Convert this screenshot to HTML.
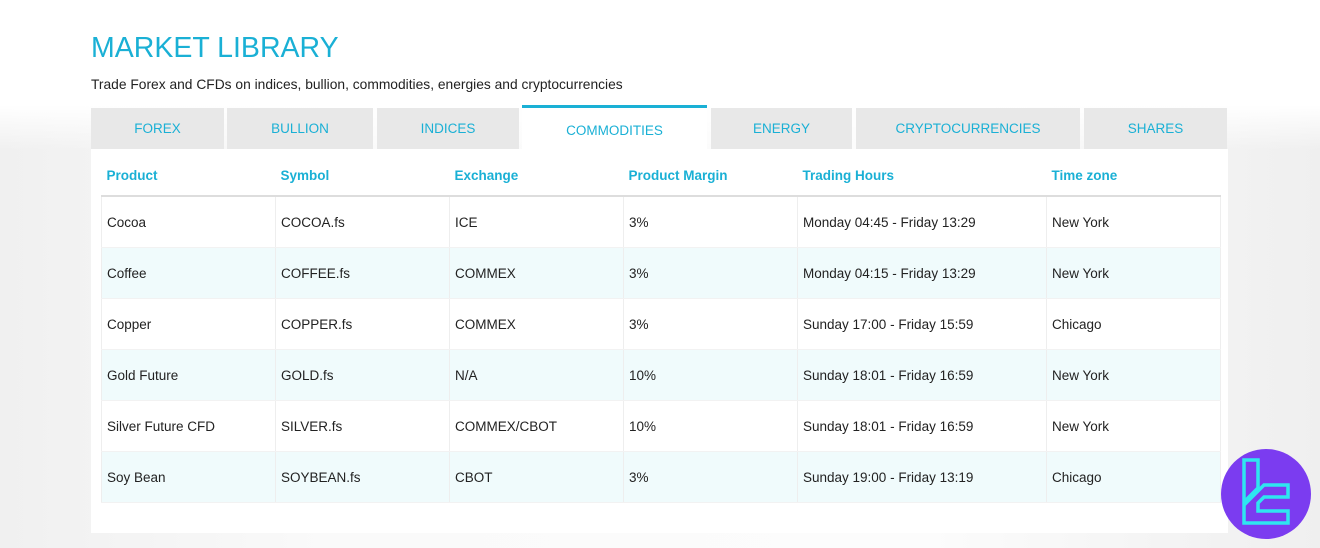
<!DOCTYPE html>
<html><head><style>
body{margin:0;width:1320px;height:548px;overflow:hidden;font-family:"Liberation Sans",sans-serif;background:linear-gradient(90deg,#f0f0f0 0%,#fafafa 25%,#fcfcfc 70%,#efefef 100%);position:relative}
.top{position:absolute;left:0;top:0;width:1320px;height:150px;background:linear-gradient(180deg,#fff 0%,#fff 70%,rgba(255,255,255,0) 100%)}
h1{position:absolute;left:91px;top:32px;margin:0;font-weight:normal;font-size:28.5px;color:#1ab0d5}
.sub{position:absolute;left:91px;top:77px;font-size:13.8px;color:#222}
.tab{position:absolute;top:108px;height:41px;background:#e8e8e8;color:#1ab0d5;font-size:13.5px;display:flex;align-items:center;justify-content:center}
.tab.a{background:#fff;border-top:3px solid #1ab0d5;top:105px;height:44px}
.panel{position:absolute;left:91px;top:149px;width:1137px;height:384px;background:#fff}
table{position:absolute;left:101px;top:155px;border-collapse:collapse;font-size:13.5px;color:#222}
th{color:#1ab0d5;text-align:left;font-weight:bold;height:40px;padding:0 5px;border-bottom:2px solid #ddd}
td{height:50px;padding:0 5px;border-left:1px solid #eee;border-right:1px solid #eee;border-bottom:1px solid #f2f2f2}
tr:nth-child(odd) td{background:#f0fbfc}
.logo{position:absolute;left:1221px;top:449px;width:90px;height:90px;border-radius:50%;background:#7b3cf0}
</style></head><body>
<div class="top"></div>
<h1>MARKET LIBRARY</h1>
<div class="sub">Trade Forex and CFDs on indices, bullion, commodities, energies and cryptocurrencies</div>
<div class="tab" style="left:91px;width:133px">FOREX</div>
<div class="tab" style="left:227px;width:146px">BULLION</div>
<div class="tab" style="left:377px;width:142px">INDICES</div>
<div class="tab a" style="left:522px;width:185px">COMMODITIES</div>
<div class="tab" style="left:711px;width:141px">ENERGY</div>
<div class="tab" style="left:856px;width:224px">CRYPTOCURRENCIES</div>
<div class="tab" style="left:1084px;width:143px">SHARES</div>
<div class="panel"></div>
<table>
<colgroup><col style="width:174px"><col style="width:174px"><col style="width:174px"><col style="width:174px"><col style="width:249px"><col style="width:174px"></colgroup>
<tr><th>Product</th><th>Symbol</th><th>Exchange</th><th>Product Margin</th><th>Trading Hours</th><th>Time zone</th></tr>
<tr><td>Cocoa</td><td>COCOA.fs</td><td>ICE</td><td>3%</td><td>Monday 04:45 - Friday 13:29</td><td>New York</td></tr>
<tr><td>Coffee</td><td>COFFEE.fs</td><td>COMMEX</td><td>3%</td><td>Monday 04:15 - Friday 13:29</td><td>New York</td></tr>
<tr><td>Copper</td><td>COPPER.fs</td><td>COMMEX</td><td>3%</td><td>Sunday 17:00 - Friday 15:59</td><td>Chicago</td></tr>
<tr><td>Gold Future</td><td>GOLD.fs</td><td>N/A</td><td>10%</td><td>Sunday 18:01 - Friday 16:59</td><td>New York</td></tr>
<tr><td>Silver Future CFD</td><td>SILVER.fs</td><td>COMMEX/CBOT</td><td>10%</td><td>Sunday 18:01 - Friday 16:59</td><td>New York</td></tr>
<tr><td>Soy Bean</td><td>SOYBEAN.fs</td><td>CBOT</td><td>3%</td><td>Sunday 19:00 - Friday 13:19</td><td>Chicago</td></tr>
</table>
<div class="logo"><svg width="90" height="90" viewBox="0 0 90 90"><path d="M23 11h14v28l-14 14zM23 74V56l20-20h24v12H43l-6 6v8h30v12z" fill="none" stroke="#2ee6f0" stroke-width="3.5" stroke-linejoin="miter"/></svg></div>
</body></html>
